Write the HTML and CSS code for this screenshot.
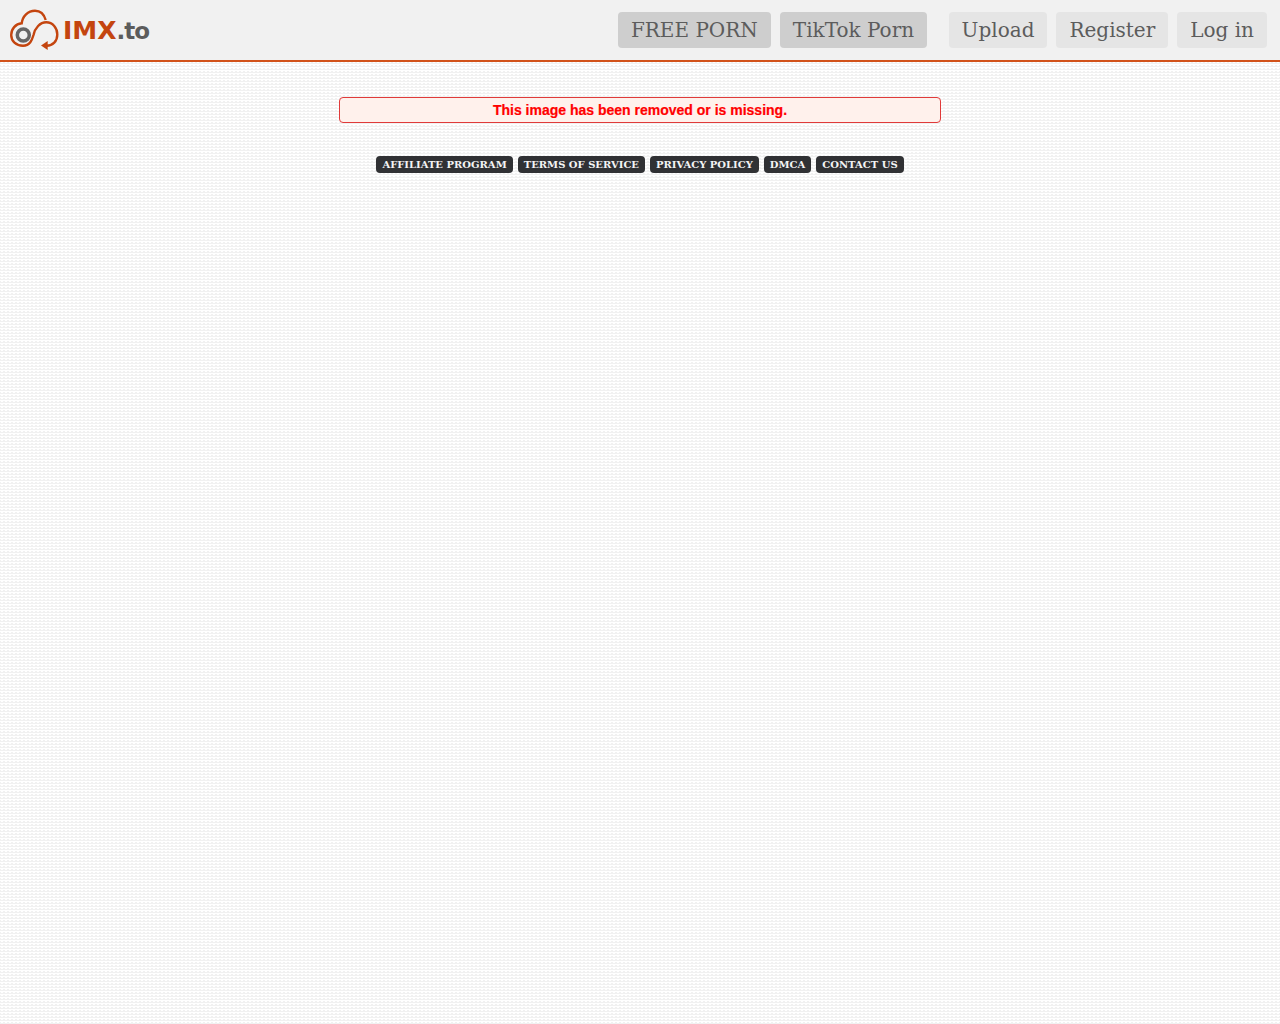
FILE: index.html
```html
<!DOCTYPE html>
<html lang="en">
<head>
<meta charset="utf-8">
<title>IMX.to</title>
<link rel="stylesheet" href="styles.css">
</head>
<body>
<header class="top">
  <a class="logo" href="#">
    <svg class="cloud" width="50" height="42" viewBox="0 0 50 42" fill="none">
      <path d="M35.700 11C34 5 30 1.700 25 1.700C18 1.700 12.500 7 11.700 14.300C5.500 15 1.200 20 1.200 26C1.200 32 6 36.700 13 36.700C20 36.700 22 31 23.500 26C25 19 30 13.300 36.200 13.300C42.800 13.300 47.300 19 47.300 25.500C47.300 32 43 37 36 36.700" stroke="#c4450f" stroke-width="2.400"/>
      <path d="M31 36.500L37.700 32V41Z" fill="#c4450f"/>
      <circle cx="13.300" cy="26" r="6" stroke="#666" stroke-width="3.500"/>
    </svg>
    <span class="wordmark"><span class="imx">IMX</span><span class="to">.to</span></span>
  </a>
  <nav class="nav">
    <a class="btn promo" href="#">FREE PORN</a>
    <a class="btn promo last-promo" href="#">TikTok Porn</a>
    <a class="btn" href="#">Upload</a>
    <a class="btn" href="#">Register</a>
    <a class="btn" href="#">Log in</a>
  </nav>
</header>
<main class="main">
  <div class="error">This image has been removed or is missing.</div>
  <div class="links">
    <a class="tag" href="#">AFFILIATE PROGRAM</a>
    <a class="tag" href="#">TERMS OF SERVICE</a>
    <a class="tag" href="#">PRIVACY POLICY</a>
    <a class="tag" href="#">DMCA</a>
    <a class="tag" href="#">CONTACT US</a>
  </div>
</main>
</body>
</html>
```
FILE: styles.css
```css
html, body { margin: 0; padding: 0; }
body {
  min-height: 1024px;
  background-color: #fff;
  background-image:
    linear-gradient(to bottom, #f1f1f1 1px, transparent 1px),
    linear-gradient(45deg, #f1f1f1 25%, transparent 25%),
    linear-gradient(-45deg, #f1f1f1 25%, transparent 25%);
  background-size: 100% 3px, 4px 3px, 4px 3px;
  font-family: "DejaVu Serif", serif;
}
a { text-decoration: none; }
.top {
  box-sizing: border-box;
  height: 62px;
  background: #f1f1f1;
  border-bottom: 2px solid #d2521a;
  display: flex;
  align-items: flex-start;
  justify-content: space-between;
  padding: 12px 13px 0 10px;
}
.logo { display: flex; align-items: flex-start; gap: 3px; margin-top: -3px; height: 42px; }
.cloud { display: block; }
.wordmark { display: block; font-family: "DejaVu Sans", sans-serif; font-weight: 700; line-height: 44px; white-space: nowrap; }
.imx { color: #c4450f; font-size: 25px; }
.to { color: #5c5c5c; font-size: 23px; letter-spacing: -1px; }
.nav { display: flex; gap: 9px; }
.btn {
  display: block;
  height: 36px;
  line-height: 36px;
  padding: 0 13px;
  border-radius: 4px;
  background: #e5e5e5;
  color: #5c5c5c;
  font-size: 20px;
}
.promo { background: #cecece; }
.last-promo { margin-right: 12.500px; }
.main { display: flex; flex-direction: column; align-items: center; padding-top: 35px; }
.error {
  box-sizing: border-box;
  width: 602px;
  height: 26px;
  line-height: 24px;
  text-align: center;
  background: #fff1ec;
  border: 1px solid #e03a3a;
  border-radius: 4px;
  color: #f00;
  font-family: "Liberation Sans", sans-serif;
  font-weight: 700;
  font-size: 14px;
  -webkit-text-stroke: 0.2px #f00;
}
.links { display: flex; gap: 5px; margin-top: 33px; }
.tag {
  display: block;
  height: 17px;
  line-height: 17px;
  padding: 0 6px;
  border-radius: 4px;
  background: #303134;
  color: #f4f4f4;
  font-size: 10px;
  font-weight: 700;
}
```
